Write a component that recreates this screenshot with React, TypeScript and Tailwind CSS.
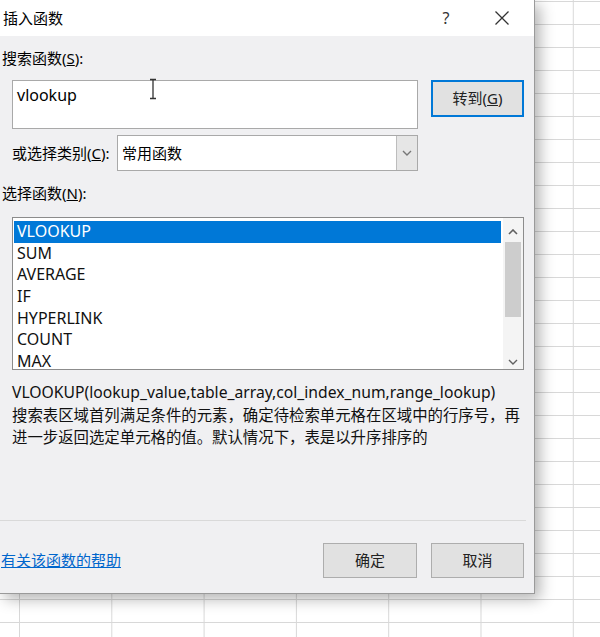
import React from "react"

const functions = ["VLOOKUP", "SUM", "AVERAGE", "IF", "HYPERLINK", "COUNT", "MAX"]

function ChevronUp() {
  return (
    <svg width="10" height="6" viewBox="0 0 10 6" fill="none">
      <path d="M1 5 L5 1 L9 5" stroke="#606060" strokeWidth="1.6" />
    </svg>
  )
}

function ChevronDown({ color = "#606060" }: { color?: string }) {
  return (
    <svg width="10" height="6" viewBox="0 0 10 6" fill="none">
      <path d="M1 1 L5 5 L9 1" stroke={color} strokeWidth="1.4" />
    </svg>
  )
}

export default function App() {
  return (
    <div className="relative w-[600px] h-[637px] overflow-hidden bg-white bg-[linear-gradient(to_right,#d8d8d8_1px,transparent_1px),linear-gradient(to_bottom,#d8d8d8_1px,transparent_1px)] bg-size-[92.3px_23px] bg-position-[19px_1px] font-['Noto_Sans','Noto_Sans_CJK_SC',sans-serif] text-black">
      <div className="flex flex-col w-[535px] h-[594px] bg-[#f0f0f2] border-r border-b border-[#9a9a9a] shadow-[5px_5px_14px_rgba(0,0,0,0.3)]">
        {/* title bar */}
        <div className="flex items-center h-[36px] shrink-0 bg-white">
          <span className="pl-[3px] text-[15px]">插入函数</span>
          <span className="ml-auto w-[20px] text-center text-[16px] text-[#333]">?</span>
          <svg className="ml-[38px] mr-[24px]" width="16" height="16" viewBox="0 0 16 16" fill="none">
            <path d="M1.5 1.5 L14.5 14.5 M14.5 1.5 L1.5 14.5" stroke="#333" strokeWidth="1.3" />
          </svg>
        </div>

        <div className="mt-[12px] pl-[2px] text-[15px] leading-[20px]">
          搜索函数(<span className="underline">S</span>):
        </div>

        <div className="mt-[12px] flex items-start">
          <div className="relative ml-[12px] w-[406px] h-[49px] bg-white border border-[#a9a9a9]">
            <span className="block pl-[4px] pt-[4px] text-[16px] leading-[20px]">vlookup</span>
            <svg className="absolute left-[135px] top-[-3px]" width="10" height="22" viewBox="0 0 10 22" fill="none">
              <path d="M2 1.5 H8 M5 1.5 V20.5 M2 20.5 H8" stroke="#333" strokeWidth="1.3" />
            </svg>
          </div>
          <button className="ml-[13px] w-[93px] h-[37px] bg-[#e1e1e1] border-2 border-[#0078d7] text-[15px] text-[#222]">
            转到(<span className="underline">G</span>)
          </button>
        </div>

        <div className="mt-[6px] flex items-center">
          <span className="pl-[12px] w-[117px] text-[15px] whitespace-nowrap">
            或选择类别(<span className="underline">C</span>):
          </span>
          <div className="flex w-[301px] h-[36px] bg-white border border-[#a9a9a9]">
            <span className="flex-1 pl-[4px] text-[15px] leading-[34px]">常用函数</span>
            <div className="flex w-[21px] items-center justify-center bg-[#e6e6e6] border-l border-[#bdbdbd]">
              <ChevronDown color="#777" />
            </div>
          </div>
        </div>

        <div className="mt-[12px] pl-[2px] text-[15px] leading-[20px]">
          选择函数(<span className="underline">N</span>):
        </div>

        <div className="mt-[14px] ml-[12px] flex w-[512px] h-[153px] bg-white border border-[#8c8c8c]">
          <div className="flex-1 pt-[3px] pl-[1px] pr-[2px]">
            {functions.map((f, i) => (
              <div
                key={f}
                className={
                  i === 0
                    ? "h-[21.7px] pl-[3px] text-[16px] leading-[21.7px] bg-[#0078d7] text-white"
                    : "h-[21.7px] pl-[3px] text-[16px] leading-[21.7px] text-[#111]"
                }
              >
                {f}
              </div>
            ))}
          </div>
          <div className="flex w-[20px] flex-col bg-[#f4f4f4]">
            <div className="mt-[4px] flex h-[20px] items-center justify-center">
              <ChevronUp />
            </div>
            <div className="mx-[2px] h-[75px] bg-[#cdcdcd]" />
            <div className="flex-1" />
            <div className="flex h-[14px] items-center justify-center">
              <ChevronDown />
            </div>
          </div>
        </div>

        <div className="mt-[12px] pl-[12px] text-[15.7px] leading-[20px] text-[#111] whitespace-nowrap">
          VLOOKUP(lookup_value,table_array,col_index_num,range_lookup)
        </div>
        <div className="mt-[3px] pl-[12px] text-[15.4px] leading-[22px] text-[#111] whitespace-nowrap">
          搜索表区域首列满足条件的元素，确定待检索单元格在区域中的行序号，再
          <br />
          进一步返回选定单元格的值。默认情况下，表是以升序排序的
        </div>

        <div className="mt-[71px] h-px w-[526px] bg-[#d9d9d9]" />

        <div className="mt-[22px] flex items-center">
          <span className="pl-[1px] text-[15px] text-[#0066cc] underline">有关该函数的帮助</span>
          <button className="ml-auto w-[94px] h-[35px] bg-[#e1e1e1] border border-[#adadad] text-[15px] text-[#222]">
            确定
          </button>
          <button className="ml-[14px] mr-[10px] w-[93px] h-[35px] bg-[#e1e1e1] border border-[#adadad] text-[15px] text-[#222]">
            取消
          </button>
        </div>
      </div>
    </div>
  )
}
